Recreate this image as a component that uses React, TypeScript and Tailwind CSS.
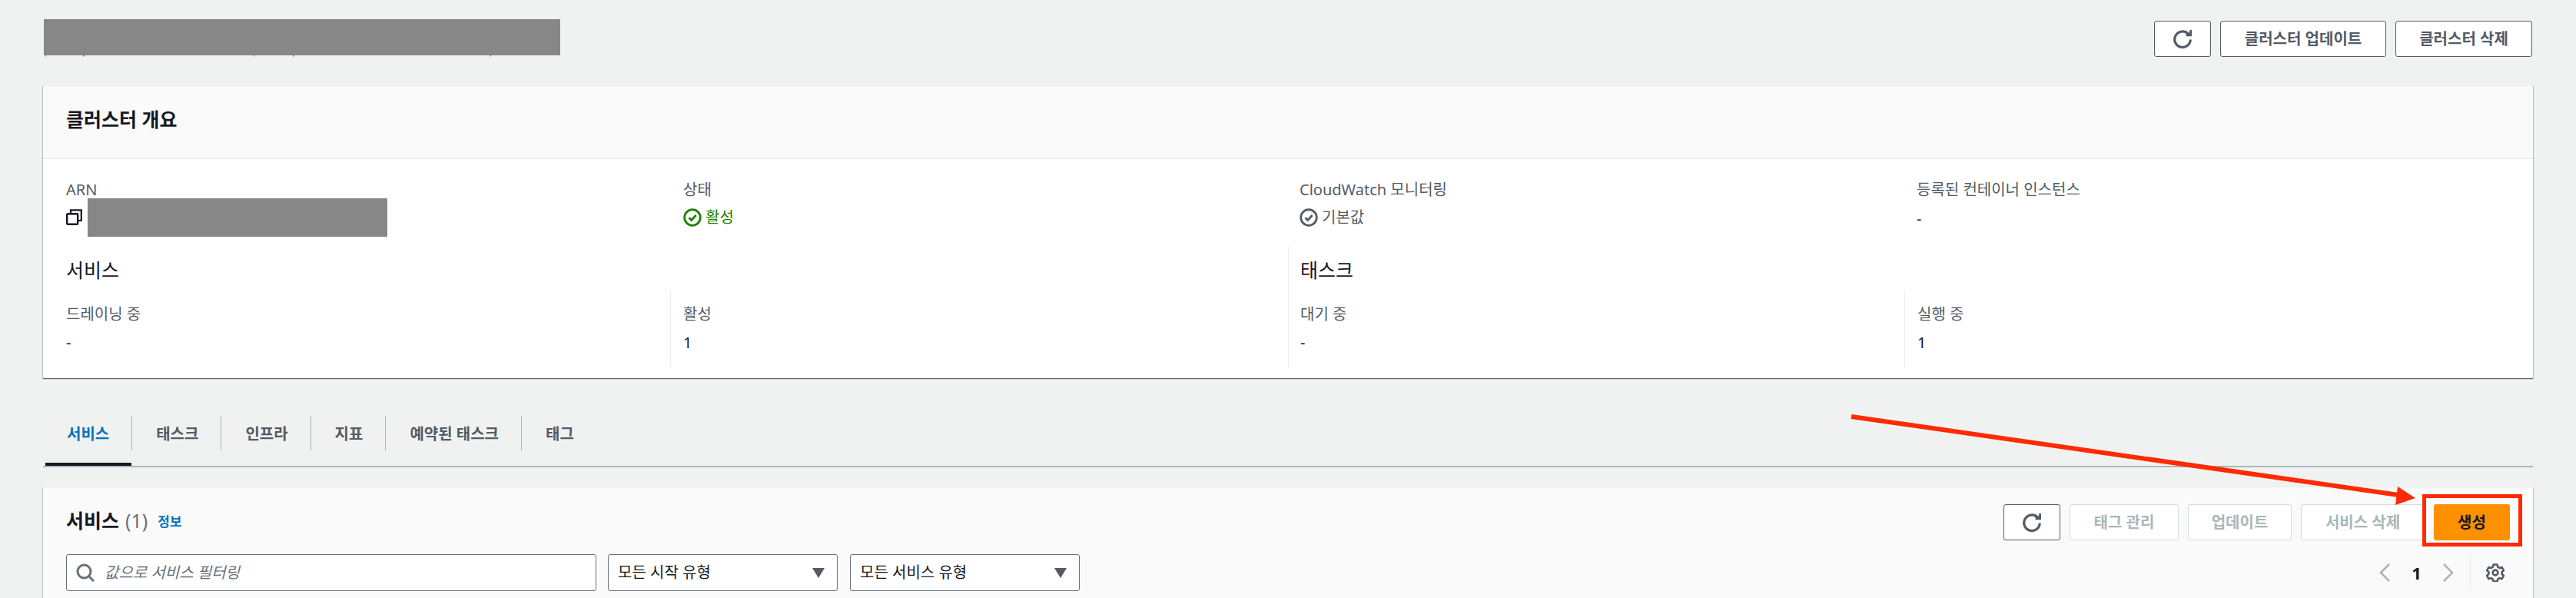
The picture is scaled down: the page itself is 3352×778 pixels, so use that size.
import React from "react";

const Refresh = ({ className = "" }: { className?: string }) => (
  <svg viewBox="0 0 24 24" className={`w-[26px] h-[26px] ${className}`} fill="none" stroke="#545b64" strokeWidth="3">
    <path d="M21.5 12.5a9.5 9.5 0 1 1-3-7.2" />
    <path d="M15.5 8.5H23V1z" fill="#545b64" stroke="none" />
    <path d="M16 7h7V1h-2.5v3.5H16z" fill="#545b64" stroke="none" />
  </svg>
);

const Check = ({ color }: { color: string }) => (
  <svg viewBox="0 0 24 24" className="w-[24px] h-[24px] shrink-0" fill="none" stroke={color}>
    <circle cx="12" cy="12" r="10.3" strokeWidth="2.8" />
    <path d="M7.5 12.2l3.2 3.2 6-6.4" strokeWidth="2.8" />
  </svg>
);

const Btn = ({ w, children, disabled }: { w: string; children: React.ReactNode; disabled?: boolean }) => (
  <div
    className={`${w} h-[47px] rounded-[3px] border flex items-center justify-center text-[20px] font-bold bg-white ${
      disabled ? "border-[#d5dbdb] text-[#aab7b8]" : "border-[#545b64] text-[#545b64]"
    }`}
  >
    {children}
  </div>
);

const Label = ({ children }: { children: React.ReactNode }) => (
  <div className="h-[24px] leading-[24px] text-[20px] text-[#545b64] whitespace-nowrap">{children}</div>
);

const Stat = ({ label, value, line }: { label: string; value: string; line?: boolean }) => (
  <div className={`pt-[19px] ${line ? "border-l border-[#eaeded] pl-[16px]" : ""}`}>
    <Label>{label}</Label>
    <div className="mt-[13px] h-[24px] leading-[24px] text-[20px] text-[#16191f]">{value}</div>
  </div>
);

const Tab = ({ children, active }: { children: React.ReactNode; active?: boolean }) => (
  <div className="flex flex-col">
    <div
      className={`h-[45px] flex items-center pt-[3px] pl-[31px] pr-[29px] border-r border-[#aab7b8] text-[20px] font-bold whitespace-nowrap ${
        active ? "text-[#0073bb]" : "text-[#545b64]"
      }`}
    >
      {children}
    </div>
    <div className={`mt-[16px] h-[4px] ml-[3px] mr-[1px] ${active ? "bg-[#16191f]" : ""}`} />
  </div>
);

const Select = ({ children }: { children: React.ReactNode }) => (
  <div className="w-[299px] h-[48px] rounded-[3px] border border-[#687078] bg-white flex items-center justify-between pl-[12px] pr-[16px] text-[20px] text-[#16191f]">
    <span>{children}</span>
    <svg viewBox="0 0 16 13" className="w-[16px] h-[13px]">
      <path d="M0 0h16L8 13z" fill="#545b64" />
    </svg>
  </div>
);

export default function App() {
  return (
    <div className="relative w-[3352px] h-[778px] overflow-hidden bg-[#f0f2f2] px-[56px] font-['Noto_Sans','Noto_Sans_CJK_KR',sans-serif]">
      {/* page header */}
      <div className="flex justify-between items-start pt-[25px]">
        <div className="ml-[1px]">
          <div className="w-[672px] h-[47px] bg-[#878787]" />
          <svg width="672" height="2" className="block">
            <path d="M2 0h1v1.5H2zM51 0h1.5v1.5H51zM273 0h1v1.5h-1zM324 0h1.5v1.5H324zM581 0h1v1.5h-1z" fill="#545b64" />
          </svg>
        </div>
        <div className="flex gap-[12px] mt-[2px] mr-[1px]">
          <Btn w="w-[74px]"><Refresh /></Btn>
          <Btn w="w-[216px]">클러스터 업데이트</Btn>
          <Btn w="w-[178px]">클러스터 삭제</Btn>
        </div>
      </div>

      {/* overview card */}
      <div className="mt-[37px] bg-white border-t border-[#eaeded] shadow-[0_1px_1px_0_rgba(0,28,36,0.5),1px_1px_1px_0_rgba(0,28,36,0.15),-1px_1px_1px_0_rgba(0,28,36,0.15)]">
        <div className="h-[95px] bg-[#fafafa] border-b-2 border-[#eaeded] flex items-center pb-[6px] px-[30px]">
          <h2 className="text-[25px] font-bold text-[#16191f]">클러스터 개요</h2>
        </div>
        <div className="px-[30px] pt-[28px] pb-[15px]">
          <div className="grid grid-cols-[803px_802px_803px_1fr] h-[86px]">
            <div>
              <Label>ARN</Label>
              <div className="flex items-start -mt-[1px]">
                <svg viewBox="0 0 21 21" className="w-[21px] h-[21px] mt-[14px] shrink-0" fill="none" stroke="#16191f">
                  <rect x="1.2" y="6.2" width="14" height="13.6" rx="1" strokeWidth="2.4" />
                  <path d="M6 6V1.4h13.8V15H15.5" strokeWidth="2.2" />
                </svg>
                <div className="ml-[7px] w-[390px] h-[50px] bg-[#878787]" />
              </div>
            </div>
            <div>
              <Label>상태</Label>
              <div className="mt-[12px] flex items-center gap-[5px] text-[20px] text-[#1d8102]">
                <Check color="#1d8102" />
                <span className="leading-[24px]">활성</span>
              </div>
            </div>
            <div>
              <Label>CloudWatch 모니터링</Label>
              <div className="mt-[12px] flex items-center gap-[5px] text-[20px] text-[#545b64]">
                <Check color="#545b64" />
                <span className="leading-[24px]">기본값</span>
              </div>
            </div>
            <div>
              <Label>등록된 컨테이너 인스턴스</Label>
              <div className="mt-[14px] h-[24px] leading-[24px] text-[20px] text-[#16191f]">-</div>
            </div>
          </div>
          <div className="grid grid-cols-[1605px_1fr]">
            <div>
              <h3 className="h-[57px] flex items-center pt-[5px] text-[25px] text-[#16191f]">서비스</h3>
              <div className="grid grid-cols-[786px_1fr] h-[99px]">
                <Stat label="드레이닝 중" value="-" />
                <Stat label="활성" value="1" line />
              </div>
            </div>
            <div className="-ml-[15px] pl-[15px] border-l border-[#eaeded]">
              <h3 className="h-[57px] flex items-center pt-[5px] text-[25px] text-[#16191f]">태스크</h3>
              <div className="grid grid-cols-[786px_1fr] h-[99px]">
                <Stat label="대기 중" value="-" />
                <Stat label="실행 중" value="1" line />
              </div>
            </div>
          </div>
        </div>
      </div>

      {/* tabs */}
      <div className="mt-[49px] flex border-b-2 border-[#aab7b8]">
        <Tab active>서비스</Tab>
        <Tab>태스크</Tab>
        <Tab>인프라</Tab>
        <Tab>지표</Tab>
        <Tab>예약된 태스크</Tab>
        <div className="h-[45px] flex items-center pt-[3px] pl-[31px] text-[20px] font-bold text-[#545b64]">태그</div>
      </div>

      {/* services card */}
      <div className="mt-[25px] bg-[#fafafa] h-[200px] border-t border-[#eaeded] px-[30px] pt-[22px] shadow-[1px_1px_1px_0_rgba(0,28,36,0.2),-1px_1px_1px_0_rgba(0,28,36,0.2)]">
        <div className="flex justify-between items-center">
          <div className="flex items-center pb-[4px]">
            <h2 className="text-[25px] font-bold text-[#16191f]">서비스</h2>
            <span className="ml-[8px] text-[25px] text-[#687078]">(1)</span>
            <span className="ml-[13px] mt-[3px] text-[17px] font-bold text-[#0073bb]">정보</span>
          </div>
          <div className="flex gap-[12px]">
            <Btn w="w-[74px]"><Refresh /></Btn>
            <Btn w="w-[142px]" disabled>태그 관리</Btn>
            <Btn w="w-[135px]" disabled>업데이트</Btn>
            <Btn w="w-[161px]" disabled>서비스 삭제</Btn>
            <div className="w-[99px] h-[47px] rounded-[3px] bg-[#ff9000] flex items-center justify-center text-[20px] font-bold text-[#16191f]">
              생성
            </div>
          </div>
        </div>
        <div className="mt-[18px] flex items-center">
          <div className="w-[690px] h-[48px] rounded-[3px] border border-[#687078] bg-white flex items-center pl-[12px] gap-[13px]">
            <svg viewBox="0 0 24 24" className="w-[24px] h-[24px]" fill="none" stroke="#687078" strokeWidth="3">
              <circle cx="10.5" cy="10.5" r="8.5" />
              <path d="M16.5 16.5L23 23" />
            </svg>
            <span className="text-[20px] italic text-[#687078]">값으로 서비스 필터링</span>
          </div>
          <div className="ml-[15px] flex gap-[16px]">
            <Select>모든 시작 유형</Select>
            <Select>모든 서비스 유형</Select>
          </div>
          <div className="ml-auto flex items-center">
            <svg viewBox="0 0 14 24" className="w-[14px] h-[24px]" fill="none" stroke="#aab7b8" strokeWidth="2.6">
              <path d="M13 1L2 12l11 11" />
            </svg>
            <span className="w-[69px] text-center text-[22px] font-bold text-[#16191f]">1</span>
            <svg viewBox="0 0 14 24" className="w-[14px] h-[24px]" fill="none" stroke="#aab7b8" strokeWidth="2.6">
              <path d="M1 1l11 11L1 23" />
            </svg>
            <div className="ml-[21px] h-[46px] border-l border-[#eaeded]" />
            <svg viewBox="0 0 24 24" className="ml-[20px] mr-[7px] w-[24px] h-[24px]" fill="none" stroke="#545b64" strokeWidth="2.6" strokeLinejoin="round">
              <path d="M9.6 1.5h4.8l.8 3.1 2.2 1.3 3.1-.9 2.4 4.1-2.3 2.2v2.5l2.3 2.2-2.4 4.1-3.1-.9-2.2 1.3-.8 3.1H9.6l-.8-3.1-2.2-1.3-3.1.9-2.4-4.1 2.3-2.2v-2.5L1.1 9.1l2.4-4.1 3.1.9 2.2-1.3z" />
              <circle cx="12" cy="12" r="3.4" />
            </svg>
          </div>
        </div>
      </div>

      {/* annotations over the page */}
      <div className="absolute left-[3152px] top-[643px] w-[130px] h-[68px] border-[5px] border-[#ff2a00]" />
      <svg className="absolute left-0 top-0 pointer-events-none" width="3352" height="778">
        <path d="M2409 542L3128 645" stroke="#ff2a00" strokeWidth="6" fill="none" />
        <path d="M3120 633L3143 648L3117 657z" fill="#ff2a00" />
      </svg>
    </div>
  );
}
